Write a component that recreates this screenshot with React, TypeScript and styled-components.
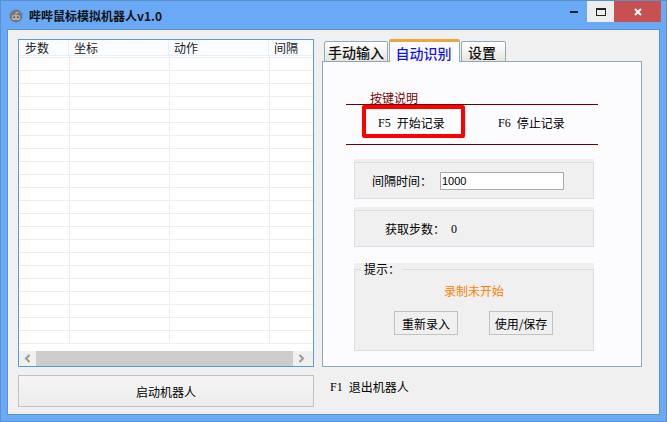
import React from 'react';
import styled, { createGlobalStyle } from 'styled-components';

const GlobalStyle = createGlobalStyle`
  html, body {
    margin: 0;
    padding: 0;
    background: #69a9f5;
  }
  * {
    box-sizing: border-box;
  }
  body {
    font-family: "Noto Sans CJK SC", "Liberation Sans", sans-serif;
    font-size: 12px;
    line-height: 12px;
    color: #000;
  }
`;

const Window = styled.div`
  width: 667px;
  height: 422px;
  display: flex;
  flex-direction: column;
  padding: 0 6px 6px;
  background: #69a9f5;
  border: 1px solid #5a90cc;
`;

const TitleBar = styled.div`
  height: 28px;
  flex: none;
  display: flex;
  align-items: flex-start;
`;

const AppIcon = styled.svg`
  width: 14px;
  height: 14px;
  margin: 8px 0 0 2px;
  flex: none;
`;

const Title = styled.div`
  margin: 8px 0 0 6px;
  font-size: 12px;
  line-height: 14px;
  font-weight: 700;
  color: #111;
`;

const WindowControls = styled.div`
  margin-left: auto;
  margin-right: -1px;
  display: flex;
  align-items: flex-start;
`;

const ControlButton = styled.div<{ $kind: 'min' | 'max' | 'close' }>`
  height: 21px;
  width: ${(p) => (p.$kind === 'close' ? 47 : p.$kind === 'max' ? 27 : 26)}px;
  display: flex;
  align-items: center;
  justify-content: center;
  background: ${(p) =>
    p.$kind === 'close' ? '#c75050' : p.$kind === 'max' ? '#eeeeee' : 'transparent'};
`;

const Client = styled.div`
  flex: 1;
  display: grid;
  grid-template-columns: 296px 320px;
  grid-template-rows: 328px 32px;
  column-gap: 8px;
  row-gap: 8px;
  padding: 9px 0 0 10px;
  background: #f0f0f0;
  border: 1px solid #5b92d0;
`;

const List = styled.div`
  display: flex;
  flex-direction: column;
  background: #fff;
  border: 1px solid #5b9bdc;
`;

const ListHeader = styled.div`
  height: 16px;
  flex: none;
  display: grid;
  grid-template-columns: 50px 100px 100px 1fr;
  background: #fbfcff;
  border-bottom: 1px solid #e5eefb;
`;

const HeaderCell = styled.div`
  padding: 1px 0 0 5px;
  line-height: 13px;
  color: #222;
  border-right: 1px solid #e5eefb;
  &:first-child {
    padding-left: 6px;
  }
  &:last-child {
    border-right: none;
  }
`;

const ListBody = styled.div`
  height: 293px;
  flex: none;
  margin-bottom: 2px;
  overflow: hidden;
`;

const ListRow = styled.div<{ $lead?: boolean }>`
  height: ${(p) => (p.$lead ? 2 : 13)}px;
  display: grid;
  grid-template-columns: 51px 100px 100px 1fr;
  border-bottom: 1px solid #eeeeee;
`;

const ListCell = styled.div`
  border-right: 1px solid #eeeeee;
  &:last-child {
    border-right: none;
  }
`;

const ScrollBar = styled.div`
  height: 15px;
  flex: none;
  display: flex;
  background: #f0f0f0;
`;

const ScrollArrow = styled.div`
  width: 17px;
  flex: none;
  display: flex;
  align-items: center;
  justify-content: center;
`;

const ScrollThumb = styled.div`
  width: 257px;
  flex: none;
  background: #cdcdcd;
`;

const Tabs = styled.div`
  display: flex;
  flex-direction: column;
`;

const TabStrip = styled.div`
  height: 23px;
  flex: none;
  display: flex;
  align-items: flex-end;
  padding-left: 2px;
  margin-bottom: -1px;
`;

const Tab = styled.div<{ $width: number; $active?: boolean }>`
  position: relative;
  width: ${(p) => p.$width}px;
  height: ${(p) => (p.$active ? 23 : 21)}px;
  margin-right: 1px;
  display: flex;
  justify-content: center;
  padding: ${(p) => (p.$active ? '4px 2px 0 0' : '3px 0 0 0')};
  font-size: 14px;
  line-height: 15px;
  font-weight: 500;
  color: ${(p) => (p.$active ? '#1414f0' : '#111')};
  background: ${(p) =>
    p.$active ? '#fcfcff' : 'linear-gradient(#ffffff, #e6e6de)'};
  border: 1px solid #8ea9bd;
  border-bottom: ${(p) => (p.$active ? 'none' : '1px solid #8ea9bd')};
  border-top: ${(p) => (p.$active ? '3px solid #f0a63c' : '1px solid #8ea9bd')};
  border-radius: 2px 2px 0 0;
  z-index: ${(p) => (p.$active ? 1 : 0)};
`;

const SettingsLabel = styled.span`
  margin-left: -3px;
`;

const TabPane = styled.div`
  flex: 1;
  padding: 30px 0 0 23px;
  background: #fcfcff;
  border: 1px solid #8ea9bd;
`;

const KeySection = styled.div`
  width: 252px;
`;

const KeyLegend = styled.div`
  height: 12px;
  padding-left: 24px;
  color: #7a0000;
`;

const KeyRow = styled.div`
  height: 41px;
  display: flex;
  align-items: flex-start;
  border-top: 1px solid #700000;
  border-bottom: 1px solid #700000;
`;

const KeyHint = styled.div<{ $highlight?: boolean }>`
  height: 33px;
  display: flex;
  align-items: center;
  gap: 6px;
  ${(p) =>
    p.$highlight
      ? `
    width: 103px;
    margin-left: 16px;
    padding: 3px 0 0 12px;
    border: 4px solid #ff0000;
    border-radius: 2px;
  `
      : `
    margin-left: 33px;
    padding: 3px 0 0 0;
  `}
`;

const KeyCode = styled.span`
  font-family: "Liberation Serif", serif;
  font-size: 12px;
`;

const Group = styled.div<{ $top: number; $height: number }>`
  width: 240px;
  height: ${(p) => p.$height}px;
  margin: ${(p) => p.$top}px 0 0 8px;
  padding-top: 3px;
  background: #f0f0f0;
`;

const GroupFrame = styled.div<{ $indent: number }>`
  height: 100%;
  display: flex;
  align-items: center;
  padding-left: ${(p) => p.$indent}px;
  border: 1px solid #dddddd;
`;

const FieldLabel = styled.span`
  width: 68px;
`;

const TextField = styled.input`
  width: 124px;
  height: 18px;
  padding: 0 0 0 1px;
  font-family: "Liberation Sans", sans-serif;
  font-size: 11px;
  color: #000;
  background: #fff;
  border: 1px solid #ababab;
  outline: none;
`;

const StepValue = styled.span`
  margin-left: 6px;
  font-family: "Liberation Serif", serif;
  font-size: 12px;
`;

const HintBand = styled.div`
  width: 240px;
  height: 88px;
  margin: 16px 0 0 8px;
  background: #f0f0f0;
`;

const HintGroup = styled.fieldset`
  height: 88px;
  margin: 0;
  padding: 0;
  min-width: 0;
  border: 1px solid #dddddd;
`;

const HintLegend = styled.legend`
  margin-left: 6px;
  padding: 0 3px;
  line-height: 12px;
`;

const HintStatus = styled.div`
  margin-top: 10px;
  text-align: center;
  color: #ff8000;
`;

const HintActions = styled.div`
  margin-top: 14px;
  padding-right: 1px;
  display: flex;
  justify-content: center;
  gap: 31px;
`;

const SmallButton = styled.button`
  width: 64px;
  height: 24px;
  padding: 0;
  font-family: inherit;
  font-size: 12px;
  color: #000;
  background: #f0f0f0;
  border: 1px solid #c2c2c2;
`;

const StartButton = styled.button`
  padding: 0;
  font-family: inherit;
  font-size: 12px;
  color: #000;
  background: linear-gradient(#f5f5f5, #ececec);
  border: 1px solid #c2c2c2;
`;

const ExitHint = styled.div`
  display: flex;
  align-items: flex-start;
  gap: 6px;
  padding: 6px 0 0 8px;
`;

const columns = ['步数', '坐标', '动作', '间隔'];
const rows = Array.from({ length: 23 }, (_, i) => i);

const App = () => {
  return (
    <Window>
      <GlobalStyle />
      <TitleBar>
        <AppIcon viewBox='0 0 14 14'>
          <circle cx='7' cy='7' r='6.5' fill='#777777' />
          <rect x='3' y='6' width='8' height='5' rx='1.5' fill='#b0b0b0' />
          <rect x='4.5' y='7.5' width='1.5' height='1.5' fill='#444444' />
          <rect x='8' y='7.5' width='1.5' height='1.5' fill='#444444' />
          <path d='M7 6V3.5H9.5' stroke='#b8b8b8' fill='none' />
        </AppIcon>
        <Title>哔哔鼠标模拟机器人v1.0</Title>
        <WindowControls>
          <ControlButton $kind='min'>
            <svg width='8' height='2' viewBox='0 0 8 2'>
              <rect width='8' height='2' fill='#222222' />
            </svg>
          </ControlButton>
          <ControlButton $kind='max'>
            <svg width='10' height='8' viewBox='0 0 10 8'>
              <rect x='0.5' y='0.5' width='9' height='7' fill='none' stroke='#222222' />
              <rect width='10' height='2' fill='#222222' />
            </svg>
          </ControlButton>
          <ControlButton $kind='close'>
            <svg width='8' height='8' viewBox='0 0 8 8'>
              <path d='M1 1L7 7M7 1L1 7' stroke='#ffffff' strokeWidth='2' />
            </svg>
          </ControlButton>
        </WindowControls>
      </TitleBar>
      <Client>
        <List>
          <ListHeader>
            {columns.map((column) => (
              <HeaderCell key={column}>{column}</HeaderCell>
            ))}
          </ListHeader>
          <ListBody>
            {rows.map((row) => (
              <ListRow key={row} $lead={row === 0}>
                <ListCell />
                <ListCell />
                <ListCell />
                <ListCell />
              </ListRow>
            ))}
          </ListBody>
          <ScrollBar>
            <ScrollArrow>
              <svg width='7' height='9' viewBox='0 0 7 9'>
                <path d='M5.5 1L2 4.5L5.5 8' fill='none' stroke='#999999' strokeWidth='2' />
              </svg>
            </ScrollArrow>
            <ScrollThumb />
            <ScrollArrow>
              <svg width='7' height='9' viewBox='0 0 7 9'>
                <path d='M1.5 1L5 4.5L1.5 8' fill='none' stroke='#999999' strokeWidth='2' />
              </svg>
            </ScrollArrow>
          </ScrollBar>
        </List>
        <Tabs>
          <TabStrip>
            <Tab $width={64}>手动输入</Tab>
            <Tab $width={71} $active>
              自动识别
            </Tab>
            <Tab $width={45}>
              <SettingsLabel>设置</SettingsLabel>
            </Tab>
          </TabStrip>
          <TabPane>
            <KeySection>
              <KeyLegend>按键说明</KeyLegend>
              <KeyRow>
                <KeyHint $highlight>
                  <KeyCode>F5</KeyCode>
                  <span>开始记录</span>
                </KeyHint>
                <KeyHint>
                  <KeyCode>F6</KeyCode>
                  <span>停止记录</span>
                </KeyHint>
              </KeyRow>
            </KeySection>
            <Group $top={14} $height={40}>
              <GroupFrame $indent={17}>
                <FieldLabel>间隔时间：</FieldLabel>
                <TextField defaultValue='1000' />
              </GroupFrame>
            </Group>
            <Group $top={8} $height={40}>
              <GroupFrame $indent={30}>
                <span>获取步数：</span>
                <StepValue>0</StepValue>
              </GroupFrame>
            </Group>
            <HintBand>
              <HintGroup>
                <HintLegend>提示：</HintLegend>
                <HintStatus>录制未开始</HintStatus>
                <HintActions>
                  <SmallButton>重新录入</SmallButton>
                  <SmallButton>使用/保存</SmallButton>
                </HintActions>
              </HintGroup>
            </HintBand>
          </TabPane>
        </Tabs>
        <StartButton>启动机器人</StartButton>
        <ExitHint>
          <KeyCode>F1</KeyCode>
          <span>退出机器人</span>
        </ExitHint>
      </Client>
    </Window>
  );
};

export default App;
